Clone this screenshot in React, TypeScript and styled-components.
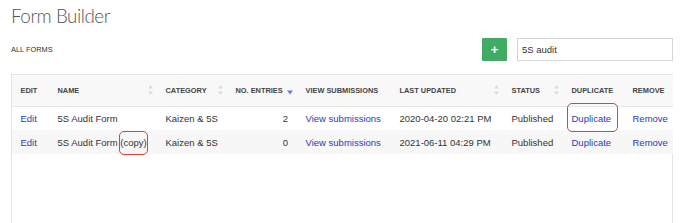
import React from "react";
import styled, { createGlobalStyle } from "styled-components";

const Global = createGlobalStyle`
  html, body { margin: 0; padding: 0; background: #fff; }
  body { font-family: "Liberation Sans", Arial, Helvetica, sans-serif; color: #333; }
  * { box-sizing: border-box; }
`;

const Page = styled.div`
  padding: 0 15px 0 11px;
`;

const Title = styled.h1`
  margin: 0;
  padding-top: 4px;
  font-family: Lato, Roboto, "Liberation Sans", sans-serif;
  font-weight: 300;
  font-size: 18.8px;
  letter-spacing: -0.45px;
  line-height: 24px;
  color: #555;
`;

const Toolbar = styled.div`
  display: flex;
  align-items: center;
  justify-content: space-between;
  margin-top: 10px;
`;

const Label = styled.div`
  font-size: 7.4px;
  text-transform: uppercase;
  color: #333;
`;

const Controls = styled.div`
  display: flex;
  align-items: center;
  gap: 10px;
`;

const AddButton = styled.button`
  width: 25px;
  height: 23px;
  border: none;
  border-radius: 1px;
  background: #41ab64;
  color: #fff;
  font-size: 13px;
  font-weight: 700;
  line-height: 23px;
  padding: 0;
  font-family: "Liberation Sans", sans-serif;
`;

const Search = styled.input`
  width: 156px;
  height: 23px;
  border: 1px solid #d6d6d6;
  padding: 0 4px;
  font-family: "Liberation Sans", sans-serif;
  font-size: 9.5px;
  color: #333;
  outline: none;
`;

const Panel = styled.div`
  margin-top: 13px;
  border: 1px solid #e4e4e4;
  height: 200px;
  background: #fff;
`;

const Table = styled.table`
  width: 100%;
  table-layout: fixed;
  border-collapse: collapse;
`;

const HeadCell = styled.th`
  height: 31px;
  padding: 0 4px 0 8.5px;
  background: #f8f8f8;
  border-bottom: 1px solid #e6e6e6;
  text-align: left;
  font-size: 7.4px;
  font-weight: 700;
  color: #444;
  text-transform: uppercase;
  white-space: nowrap;
`;

const HeadInner = styled.div`
  display: flex;
  align-items: center;
  justify-content: space-between;
`;

const Row = styled.tr<{ $striped?: boolean }>`
  background: ${(p) => (p.$striped ? "#f7f7f7" : "#fff")};
`;

const Cell = styled.td<{ $align?: "left" | "right" }>`
  height: 24px;
  padding: 0 ${(p) => (p.$align === "right" ? "9px" : "4px")} 0 8.5px;
  font-size: 9.5px;
  color: #333;
  white-space: nowrap;
  text-align: ${(p) => p.$align ?? "left"};
`;

const Link = styled.a`
  color: #2a3bbd;
  text-decoration: none;
`;

const Highlight = styled.span<{ $t: number; $b: number; $l: number; $r: number }>`
  position: relative;
  &::after {
    content: "";
    position: absolute;
    top: ${(p) => p.$t}px;
    bottom: ${(p) => p.$b}px;
    left: ${(p) => p.$l}px;
    right: ${(p) => p.$r}px;
    border: 1.7px solid #ec3b34;
    border-radius: 5px;
    pointer-events: none;
  }
`;

const SortBoth = () => (
  <svg width="5" height="10" viewBox="0 0 5 10">
    <polygon points="2.5,0 5,3.6 0,3.6" fill="#dcdcdc" />
    <polygon points="0,6.4 5,6.4 2.5,10" fill="#dcdcdc" />
  </svg>
);

const SortDesc = () => (
  <svg width="6" height="10" viewBox="0 0 6 10" style={{ marginTop: 4 }}>
    <polygon points="0,3.5 6,3.5 3,7.5" fill="#6d7bd6" />
  </svg>
);

type Col = { label: string; width: number; sort?: "both" | "desc" };

const columns: Col[] = [
  { label: "Edit", width: 37 },
  { label: "Name", width: 108, sort: "both" },
  { label: "Category", width: 70, sort: "both" },
  { label: "No. Entries", width: 70, sort: "desc" },
  { label: "View Submissions", width: 94 },
  { label: "Last Updated", width: 112, sort: "both" },
  { label: "Status", width: 60, sort: "both" },
  { label: "Duplicate", width: 61 },
  { label: "Remove", width: 49 },
];

const rows = [
  { name: "5S Audit Form", copy: false, category: "Kaizen & 5S", entries: 2, updated: "2020-04-20 02:21 PM", status: "Published", markDup: true },
  { name: "5S Audit Form", copy: true, category: "Kaizen & 5S", entries: 0, updated: "2021-06-11 04:29 PM", status: "Published", markDup: false },
];

export default function App() {
  return (
    <Page>
      <Global />
      <Title>Form Builder</Title>
      <Toolbar>
        <Label>All Forms</Label>
        <Controls>
          <AddButton>+</AddButton>
          <Search defaultValue="5S audit" />
        </Controls>
      </Toolbar>
      <Panel>
        <Table>
          <colgroup>
            {columns.map((c) => (
              <col key={c.label} style={{ width: c.width }} />
            ))}
          </colgroup>
          <thead>
            <tr>
              {columns.map((c) => (
                <HeadCell key={c.label}>
                  <HeadInner>
                    <span>{c.label}</span>
                    {c.sort === "both" && <SortBoth />}
                    {c.sort === "desc" && <SortDesc />}
                  </HeadInner>
                </HeadCell>
              ))}
            </tr>
          </thead>
          <tbody>
            {rows.map((r, i) => (
              <Row key={i} $striped={i % 2 === 1}>
                <Cell><Link href="#">Edit</Link></Cell>
                <Cell>
                  {r.name}
                  {r.copy && (
                    <>
                      {" "}
                      <Highlight $t={-6} $b={-7} $l={-1.5} $r={-1.5}>(copy)</Highlight>
                    </>
                  )}
                </Cell>
                <Cell>{r.category}</Cell>
                <Cell $align="right">{r.entries}</Cell>
                <Cell><Link href="#">View submissions</Link></Cell>
                <Cell>{r.updated}</Cell>
                <Cell>{r.status}</Cell>
                <Cell>
                  {r.markDup ? (
                    <Highlight $t={-10} $b={-8} $l={-5} $r={-7}>
                      <Link href="#">Duplicate</Link>
                    </Highlight>
                  ) : (
                    <Link href="#">Duplicate</Link>
                  )}
                </Cell>
                <Cell><Link href="#">Remove</Link></Cell>
              </Row>
            ))}
          </tbody>
        </Table>
      </Panel>
    </Page>
  );
}
